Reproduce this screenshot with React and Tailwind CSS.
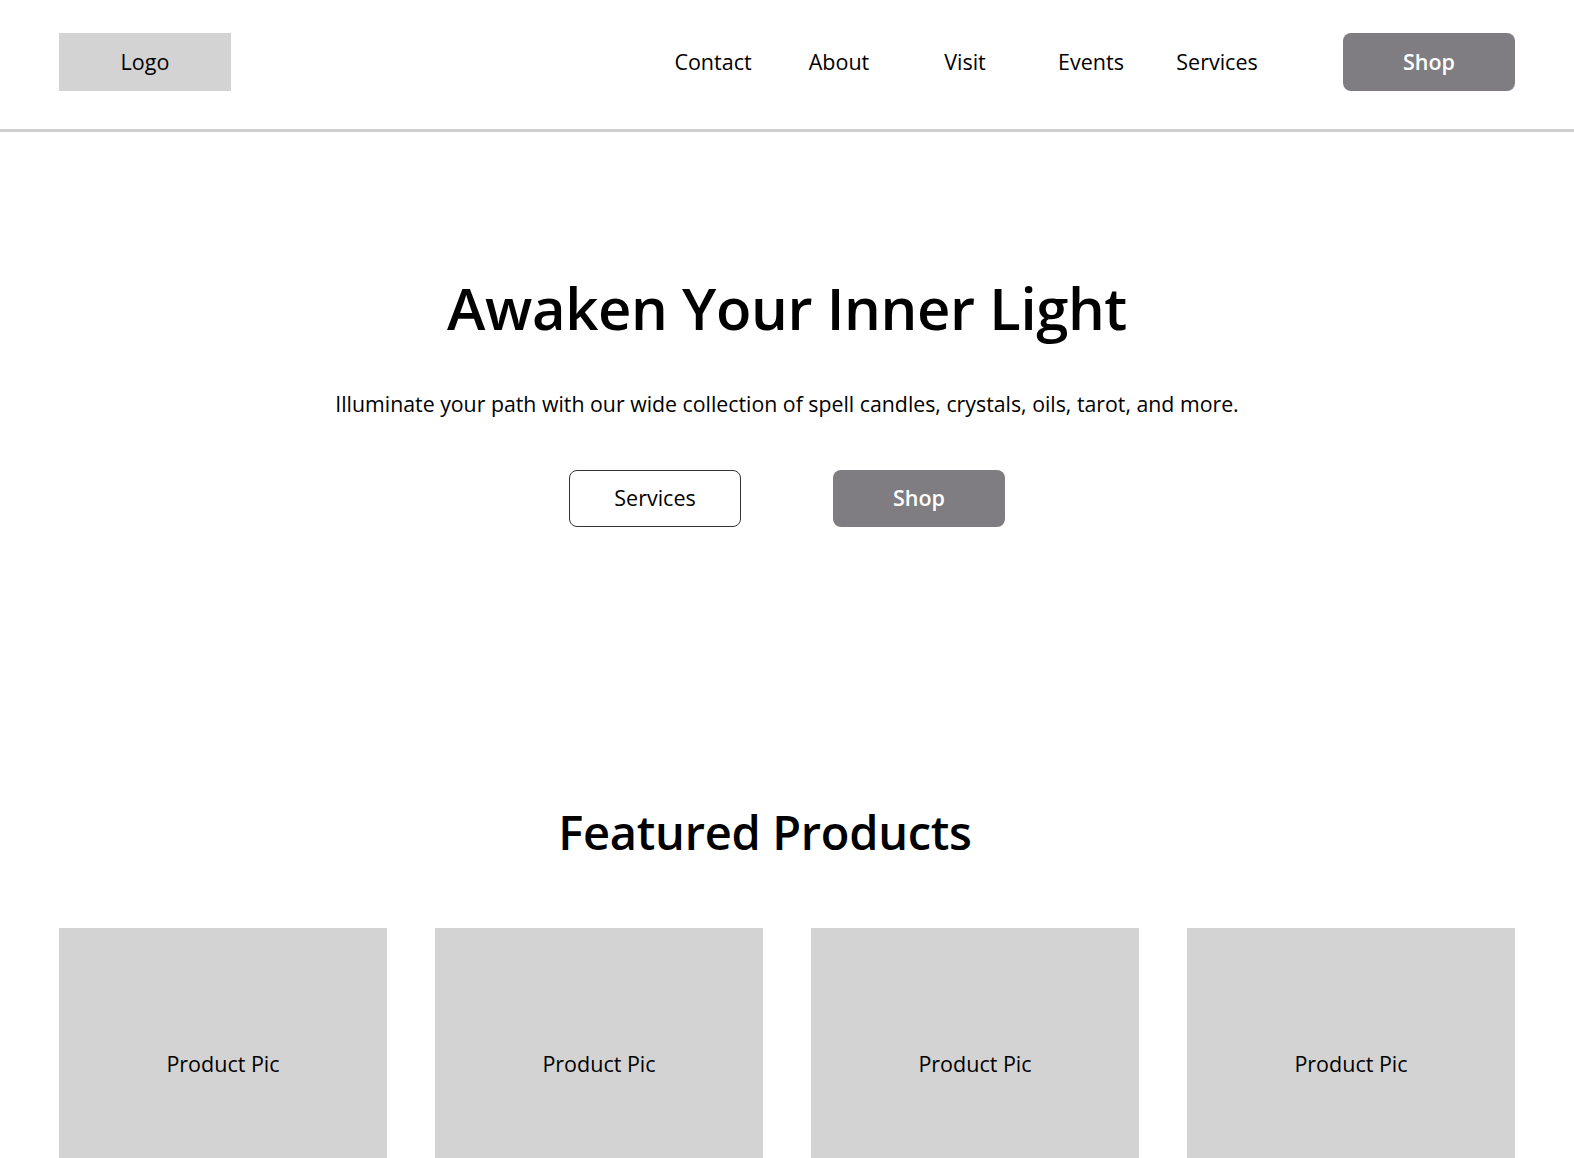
export default function App() {
  const nav = ["Contact", "About", "Visit", "Events", "Services"];
  return (
    <div className="min-h-screen bg-white text-black" style={{ fontFamily: '"Open Sans", "Noto Sans", sans-serif' }}>
      <header className="h-[132px] pt-[33px] px-[59px] flex items-start border-b-[3px] border-[#cfcfcf]">
        <div className="w-[172px] h-[58px] bg-[#d3d3d3] flex items-center justify-center text-[21.5px]">Logo</div>
        <div className="flex-1" />
        <nav className="flex h-[58px] items-center">
          {nav.map((n) => (
            <a key={n} className="w-[126px] text-center text-[21.5px]">{n}</a>
          ))}
        </nav>
        <button className="ml-[63px] w-[172px] h-[58px] rounded-lg bg-[#7f7d82] text-white text-[21.5px] font-semibold">Shop</button>
      </header>

      <section className="flex flex-col items-center">
        <h1 className="mt-[147px] text-[58px] leading-none font-semibold tracking-[-0.4px]">Awaken Your Inner Light</h1>
        <p className="mt-[53px] text-[21.3px] leading-[28px]">Illuminate your path with our wide collection of spell candles, crystals, oils, tarot, and more.</p>
        <div className="mt-[52px] flex gap-[92px]">
          <button className="w-[172px] h-[57px] rounded-lg border border-[#333] text-[21.5px]">Services</button>
          <button className="w-[172px] h-[57px] rounded-lg bg-[#7f7d82] text-white text-[21.5px] font-semibold">Shop</button>
        </div>
        <h2 className="mt-[282px] mr-[44px] text-[47px] leading-none font-semibold tracking-[-0.3px]">Featured Products</h2>
      </section>

      <section className="mt-[72px] px-[59px] grid grid-cols-4 gap-[48px]">
        {[0, 1, 2, 3].map((i) => (
          <div key={i} className="h-[273px] bg-[#d3d3d3] flex items-center justify-center text-[21.5px]">Product Pic</div>
        ))}
      </section>
    </div>
  );
}
